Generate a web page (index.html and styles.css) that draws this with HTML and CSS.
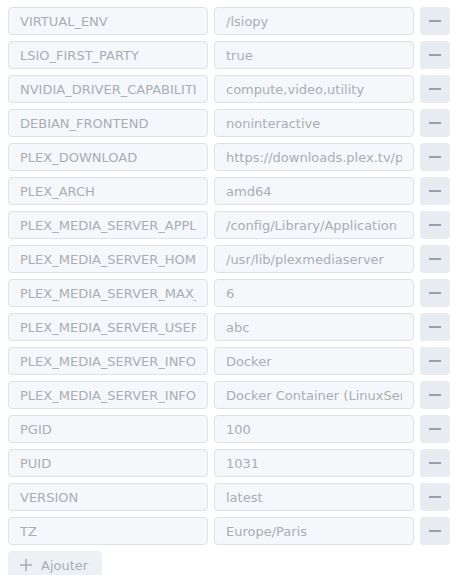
FILE: index.html
```html
<!DOCTYPE html>
<html lang="fr">
<head>
<meta charset="UTF-8">
<meta name="viewport" content="width=device-width, initial-scale=1.0">
<title>Variables d'environnement</title>
<link rel="stylesheet" href="styles.css">
</head>
<body>
<div class="env-list">
    <div class="env-row">
        <div class="env-field"><div class="env-value">VIRTUAL_ENV</div></div>
        <div class="env-field"><div class="env-value">/lsiopy</div></div>
        <button class="remove-btn" type="button"><span class="minus"></span></button>
    </div>
    <div class="env-row">
        <div class="env-field"><div class="env-value">LSIO_FIRST_PARTY</div></div>
        <div class="env-field"><div class="env-value">true</div></div>
        <button class="remove-btn" type="button"><span class="minus"></span></button>
    </div>
    <div class="env-row">
        <div class="env-field"><div class="env-value">NVIDIA_DRIVER_CAPABILITIES</div></div>
        <div class="env-field"><div class="env-value">compute,video,utility</div></div>
        <button class="remove-btn" type="button"><span class="minus"></span></button>
    </div>
    <div class="env-row">
        <div class="env-field"><div class="env-value">DEBIAN_FRONTEND</div></div>
        <div class="env-field"><div class="env-value">noninteractive</div></div>
        <button class="remove-btn" type="button"><span class="minus"></span></button>
    </div>
    <div class="env-row">
        <div class="env-field"><div class="env-value">PLEX_DOWNLOAD</div></div>
        <div class="env-field"><div class="env-value">https://downloads.plex.tv/plex-media-server-new</div></div>
        <button class="remove-btn" type="button"><span class="minus"></span></button>
    </div>
    <div class="env-row">
        <div class="env-field"><div class="env-value">PLEX_ARCH</div></div>
        <div class="env-field"><div class="env-value">amd64</div></div>
        <button class="remove-btn" type="button"><span class="minus"></span></button>
    </div>
    <div class="env-row">
        <div class="env-field"><div class="env-value">PLEX_MEDIA_SERVER_APPLICATION_SUPPORT_DIR</div></div>
        <div class="env-field"><div class="env-value">/config/Library/Application Support</div></div>
        <button class="remove-btn" type="button"><span class="minus"></span></button>
    </div>
    <div class="env-row">
        <div class="env-field"><div class="env-value">PLEX_MEDIA_SERVER_HOME</div></div>
        <div class="env-field"><div class="env-value">/usr/lib/plexmediaserver</div></div>
        <button class="remove-btn" type="button"><span class="minus"></span></button>
    </div>
    <div class="env-row">
        <div class="env-field"><div class="env-value">PLEX_MEDIA_SERVER_MAX_PLUGIN_PROCS</div></div>
        <div class="env-field"><div class="env-value">6</div></div>
        <button class="remove-btn" type="button"><span class="minus"></span></button>
    </div>
    <div class="env-row">
        <div class="env-field"><div class="env-value">PLEX_MEDIA_SERVER_USER</div></div>
        <div class="env-field"><div class="env-value">abc</div></div>
        <button class="remove-btn" type="button"><span class="minus"></span></button>
    </div>
    <div class="env-row">
        <div class="env-field"><div class="env-value">PLEX_MEDIA_SERVER_INFO_VENDOR</div></div>
        <div class="env-field"><div class="env-value">Docker</div></div>
        <button class="remove-btn" type="button"><span class="minus"></span></button>
    </div>
    <div class="env-row">
        <div class="env-field"><div class="env-value">PLEX_MEDIA_SERVER_INFO_DEVICE</div></div>
        <div class="env-field"><div class="env-value">Docker Container (LinuxServer.io)</div></div>
        <button class="remove-btn" type="button"><span class="minus"></span></button>
    </div>
    <div class="env-row">
        <div class="env-field"><div class="env-value">PGID</div></div>
        <div class="env-field"><div class="env-value">100</div></div>
        <button class="remove-btn" type="button"><span class="minus"></span></button>
    </div>
    <div class="env-row">
        <div class="env-field"><div class="env-value">PUID</div></div>
        <div class="env-field"><div class="env-value">1031</div></div>
        <button class="remove-btn" type="button"><span class="minus"></span></button>
    </div>
    <div class="env-row">
        <div class="env-field"><div class="env-value">VERSION</div></div>
        <div class="env-field"><div class="env-value">latest</div></div>
        <button class="remove-btn" type="button"><span class="minus"></span></button>
    </div>
    <div class="env-row">
        <div class="env-field"><div class="env-value">TZ</div></div>
        <div class="env-field"><div class="env-value">Europe/Paris</div></div>
        <button class="remove-btn" type="button"><span class="minus"></span></button>
    </div>
    <button class="add-btn" type="button">
        <svg class="plus" width="12" height="12" viewBox="0 0 12 12"><path d="M6 0v12M0 6h12" stroke="currentColor" stroke-width="1.6" fill="none"/></svg>
        <span>Ajouter</span>
    </button>
</div>
</body>
</html>
```

FILE: styles.css
```css
body {
    margin: 0;
    padding: 7px 0 0 8px;
    background-color: #fff;
    font-family: "DejaVu Sans", Verdana, sans-serif;
    font-size: 13px;
}

.env-list {
    display: flex;
    flex-direction: column;
    align-items: flex-start;
    gap: 6px;
}

.env-row {
    display: flex;
    gap: 6px;
}

.env-field {
    box-sizing: border-box;
    width: 200px;
    height: 28px;
    padding: 1px 11px 0;
    border: 1px solid #dde2e9;
    border-radius: 4px;
    background-color: #f5f7fa;
    color: #a9aeb5;
    line-height: 25px;
}

.env-value {
    width: 100%;
    overflow: hidden;
    white-space: nowrap;
}

.remove-btn {
    box-sizing: border-box;
    width: 30px;
    height: 28px;
    margin: 0;
    padding: 0;
    border: none;
    border-radius: 4px;
    background-color: #e7ebf2;
    display: flex;
    align-items: center;
    justify-content: center;
    cursor: pointer;
}

.minus {
    display: block;
    width: 12px;
    height: 2px;
    background-color: #9a9fa7;
}

.add-btn {
    box-sizing: border-box;
    width: 94px;
    height: 28px;
    margin: 0;
    padding: 0 0 0 12px;
    border: none;
    border-radius: 4px;
    background-color: #edf0f5;
    color: #a9aeb5;
    font-family: inherit;
    font-size: 13px;
    display: flex;
    align-items: center;
    gap: 9px;
    cursor: pointer;
}
```
